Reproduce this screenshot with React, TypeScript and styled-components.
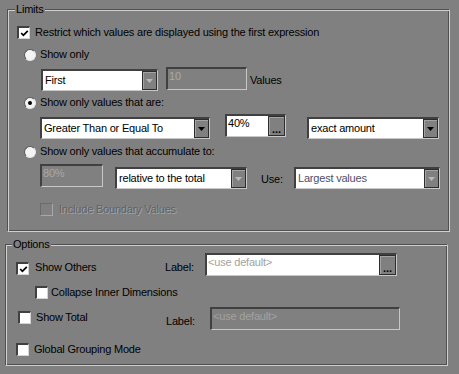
import React from 'react';
import styled, { createGlobalStyle, css } from 'styled-components';

const GlobalStyle = createGlobalStyle`
  html, body { margin: 0; padding: 0; background: #808080; }
  body {
    font-family: "Liberation Sans", Arial, sans-serif;
    font-size: 11px;
    letter-spacing: -0.2px;
    color: #000;
  }
`;

const Page = styled.div`
  width: 459px;
  height: 374px;
  overflow: hidden;
  box-sizing: border-box;
  padding-top: 9px;
  display: flex;
  flex-direction: column;
`;

const Group = styled.section<{ $ml: number; $mt: number; $h: number }>`
  position: relative;
  box-sizing: border-box;
  flex-shrink: 0;
  margin-left: ${(p) => p.$ml}px;
  margin-top: ${(p) => p.$mt}px;
  width: 443px;
  height: ${(p) => p.$h}px;
  border: 1px solid;
  border-color: #505050 #d0d0d0 #d0d0d0 #505050;
  box-shadow: inset 1px 1px 0 #d0d0d0, inset -1px -1px 0 #505050;
  display: flex;
  flex-direction: column;
`;

const Legend = styled.span<{ $left: number }>`
  position: absolute;
  top: -7px;
  left: ${(p) => p.$left}px;
  padding: 0 1px;
  line-height: 13px;
  background: #808080;
`;

const Row = styled.div<{ $mt: number; $pl: number; $h: number }>`
  display: flex;
  align-items: flex-start;
  flex-shrink: 0;
  margin-top: ${(p) => p.$mt}px;
  padding-left: ${(p) => p.$pl}px;
  height: ${(p) => p.$h}px;
`;

const Text = styled.span<{ $mt?: number; $ml?: number; $w?: number; $disabled?: boolean }>`
  line-height: 13px;
  white-space: nowrap;
  flex-shrink: 0;
  margin-top: ${(p) => p.$mt ?? 0}px;
  margin-left: ${(p) => p.$ml ?? 0}px;
  ${(p) => (p.$w ? `width: ${p.$w}px;` : '')}
  ${(p) =>
    p.$disabled &&
    css`
      color: #626262;
      text-shadow: 1px 1px 0 #a6a6a6;
    `}
`;

const CheckCell = styled.div<{ $w?: number; $mt?: number }>`
  display: flex;
  align-items: flex-start;
  flex-shrink: 0;
  margin-top: ${(p) => p.$mt ?? 0}px;
  ${(p) => (p.$w ? `width: ${p.$w}px;` : '')}
`;

const Box = styled.span<{ $mt?: number; $disabled?: boolean }>`
  box-sizing: border-box;
  width: 13px;
  height: 13px;
  flex-shrink: 0;
  margin-top: ${(p) => p.$mt ?? 0}px;
  border-style: solid;
  border-width: 2px 1px 1px 2px;
  display: flex;
  align-items: center;
  justify-content: center;
  ${(p) =>
    p.$disabled
      ? css`
          background: #808080;
          border-width: 1px;
          border-color: #6a6a6a #a8a8a8 #a8a8a8 #6a6a6a;
        `
      : css`
          background: #fff;
          border-color: #404040 #d4d4d4 #d4d4d4 #404040;
        `}
`;

const RadioDot = styled.span<{ $checked?: boolean; $mt?: number }>`
  box-sizing: border-box;
  width: 12px;
  height: 12px;
  flex-shrink: 0;
  margin-top: ${(p) => p.$mt ?? 0}px;
  border-radius: 50%;
  background: #f4f4f4;
  border: 1px solid;
  border-color: #5a5a5a #e6e6e6 #e6e6e6 #5a5a5a;
  display: flex;
  align-items: center;
  justify-content: center;
  &::after {
    content: '';
    width: 4px;
    height: 4px;
    border-radius: 50%;
    background: ${(p) => (p.$checked ? '#000' : 'transparent')};
  }
`;

const Sunken = styled.div<{ $w: number; $h: number; $mt?: number; $ml?: number; $disabled?: boolean }>`
  box-sizing: border-box;
  flex-shrink: 0;
  width: ${(p) => p.$w}px;
  height: ${(p) => p.$h}px;
  margin-top: ${(p) => p.$mt ?? 0}px;
  margin-left: ${(p) => p.$ml ?? 0}px;
  display: flex;
  align-items: stretch;
  background: ${(p) => (p.$disabled ? '#808080' : '#fff')};
  border-style: solid;
  border-width: 2px 1px 1px 2px;
  border-color: #404040 #c8c8c8 #c8c8c8 #404040;
`;

const ComboText = styled.span<{ $tone?: 'normal' | 'muted' }>`
  flex: 1;
  padding-left: 2px;
  line-height: 19px;
  white-space: nowrap;
  overflow: hidden;
  color: ${(p) => (p.$tone === 'muted' ? '#4e4e6a' : '#000')};
`;

const EditText = styled.span<{ $tone?: 'normal' | 'dim' | 'hint' }>`
  flex: 1;
  padding: 1px 0 0 1px;
  line-height: 13px;
  white-space: nowrap;
  overflow: hidden;
  color: ${(p) => (p.$tone === 'dim' ? '#a9a9a9' : p.$tone === 'hint' ? '#a2a2a2' : '#000')};
`;

const SideButton = styled.span<{ $w: number }>`
  box-sizing: border-box;
  width: ${(p) => p.$w}px;
  flex-shrink: 0;
  background: #808080;
  border: 1px solid #2c2c2c;
  box-shadow: inset 1px 1px 0 #a4a4a4;
  display: flex;
  align-items: center;
  justify-content: center;
`;

const Dots = styled.span`
  font-weight: bold;
  letter-spacing: 0;
  line-height: 8px;
  align-self: flex-end;
  padding-bottom: 2px;
  font-size: 11px;
`;

const Arrow = ({ disabled }: { disabled?: boolean }) => (
  <svg width="7" height="4" viewBox="0 0 7 4">
    <polygon points="0,0 7,0 3.5,4" fill={disabled ? '#b8b8b8' : '#000'} />
  </svg>
);

const Tick = () => (
  <svg width="9" height="9" viewBox="0 0 9 9">
    <polyline points="1.2,4 3.4,6.3 7.8,1.8" fill="none" stroke="#000" strokeWidth="1.8" />
  </svg>
);

type ComboProps = { w: number; mt?: number; ml?: number; text: string; disabled?: boolean; muted?: boolean };
const Combo = ({ w, mt, ml, text, disabled, muted }: ComboProps) => (
  <Sunken $w={w} $h={22} $mt={mt} $ml={ml}>
    <ComboText $tone={muted ? 'muted' : 'normal'}>{text}</ComboText>
    <SideButton $w={15}>
      <Arrow disabled={disabled} />
    </SideButton>
  </Sunken>
);

type EditProps = {
  w: number;
  mt?: number;
  ml?: number;
  text: string;
  disabled?: boolean;
  tone?: 'normal' | 'dim' | 'hint';
  button?: boolean;
};
const Edit = ({ w, mt, ml, text, disabled, tone, button }: EditProps) => (
  <Sunken $w={w} $h={23} $mt={mt} $ml={ml} $disabled={disabled}>
    <EditText $tone={tone}>{text}</EditText>
    {button && (
      <SideButton $w={17}>
        <Dots>...</Dots>
      </SideButton>
    )}
  </Sunken>
);

export default function App() {
  return (
    <>
      <GlobalStyle />
      <Page>
        <Group $ml={7} $mt={0} $h={223}>
          <Legend $left={7}>Limits</Legend>

          <Row $mt={16} $pl={9} $h={13}>
            <Box>
              <Tick />
            </Box>
            <Text $ml={5}>Restrict which values are displayed using the first expression</Text>
          </Row>

          <Row $mt={9} $pl={16} $h={13}>
            <RadioDot $mt={1} />
            <Text $ml={4}>Show only</Text>
          </Row>

          <Row $mt={6} $pl={33} $h={24}>
            <Combo w={117} mt={2} text="First" disabled />
            <Edit w={81} ml={8} text="10" disabled tone="dim" />
            <Text $ml={3} $mt={7}>Values</Text>
          </Row>

          <Row $mt={5} $pl={16} $h={13}>
            <RadioDot $mt={1} $checked />
            <Text $ml={4}>Show only values that are:</Text>
          </Row>

          <Row $mt={5} $pl={32} $h={27}>
            <Combo w={170} mt={3} text="Greater Than or Equal To" />
            <Edit w={61} ml={15} text="40%" button />
            <Combo w={132} mt={3} ml={21} text="exact amount" />
          </Row>

          <Row $mt={4} $pl={16} $h={13}>
            <RadioDot $mt={1} />
            <Text $ml={4}>Show only values that accumulate to:</Text>
          </Row>

          <Row $mt={6} $pl={32} $h={27}>
            <Edit w={63} text="80%" disabled tone="dim" />
            <Combo w={132} mt={3} ml={12} text="relative to the total" disabled />
            <Text $ml={14} $mt={9} $w={33}>Use:</Text>
            <Combo w={146} mt={3} text="Largest values" disabled muted />
          </Row>

          <Row $mt={12} $pl={32} $h={13}>
            <Box $disabled />
            <Text $ml={6} $disabled>Include Boundary Values</Text>
          </Row>
        </Group>

        <Group $ml={5} $mt={12} $h={122}>
          <Legend $left={6}>Options</Legend>

          <Row $mt={8} $pl={10} $h={23}>
            <CheckCell $w={149} $mt={9}>
              <Box>
                <Tick />
              </Box>
              <Text $ml={6} $mt={-1}>Show Others</Text>
            </CheckCell>
            <Text $w={40} $mt={8}>Label:</Text>
            <Edit w={192} text="<use default>" tone="hint" button />
          </Row>

          <Row $mt={10} $pl={29} $h={13}>
            <Box />
            <Text $ml={3}>Collapse Inner Dimensions</Text>
          </Row>

          <Row $mt={8} $pl={12} $h={23}>
            <CheckCell $w={148} $mt={4}>
              <Box />
              <Text $ml={5}>Show Total</Text>
            </CheckCell>
            <Text $w={44} $mt={8}>Label:</Text>
            <Edit w={190} text="<use default>" tone="hint" disabled />
          </Row>

          <Row $mt={13} $pl={10} $h={13}>
            <Box />
            <Text $ml={5}>Global Grouping Mode</Text>
          </Row>
        </Group>
      </Page>
    </>
  );
}
